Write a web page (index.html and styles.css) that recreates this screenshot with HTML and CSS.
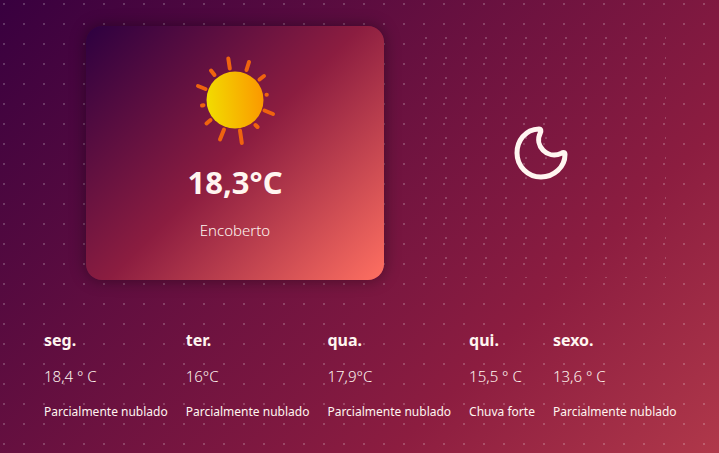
FILE: index.html
```html
<!DOCTYPE html>
<html lang="pt">
<head>
<meta charset="utf-8">
<meta name="viewport" content="width=device-width, initial-scale=1">
<title>Previsão do tempo</title>
<link rel="stylesheet" href="styles.css">
</head>
<body>
<main class="weather">
  <section class="today">
    <article class="card">
      <svg class="sun" viewBox="0 0 110 110" aria-hidden="true">
        <defs>
          <linearGradient id="disc" x1="0" y1="0.55" x2="1" y2="0.45">
            <stop offset="0" stop-color="#f2dc00"/>
            <stop offset="1" stop-color="#fb9800"/>
          </linearGradient>
        </defs>
        <g class="rays">
          <path d="M48.3 13.5 49.8 23.5"/>
          <path d="M69 17 66.500 25"/>
          <path d="M84 31 79.500 34.500"/>
          <path d="M86.500 49.700 86.800 49.700"/>
          <path d="M84.500 65.500 93 69"/>
          <path d="M75.500 80 77.500 82"/>
          <path d="M60 85.500 61.800 98"/>
          <path d="M44 84.500 40 94.500"/>
          <path d="M30.500 75 26.500 78.500"/>
          <path d="M22 60.500 23.500 60.200"/>
          <path d="M18 41 25.500 44"/>
          <path d="M31 25.500 34.500 30"/>
        </g>
        <circle cx="55" cy="55" r="28.500" fill="url(#disc)"/>
      </svg>
      <h1 class="temp">18,3°C</h1>
      <p class="summary">Encoberto</p>
    </article>
    <div class="night">
      <svg class="moon" viewBox="0 0 54 54" aria-hidden="true">
        <path d="M25 3C11 3.500 3 15 3 27A24 24 0 0 0 27 51C40 51 51 41 51 28.500C51 26.500 49.500 26 47.500 27.200C33 34 20 19 26.300 7C27.300 5 27 3 25 3Z"/>
      </svg>
    </div>
  </section>
  <ul class="forecast">
    <li class="day"><h2>seg.</h2><p class="degrees">18,4 ° C</p><p class="sky">Parcialmente nublado</p></li>
    <li class="day"><h2>ter.</h2><p class="degrees">16°C</p><p class="sky">Parcialmente nublado</p></li>
    <li class="day"><h2>qua.</h2><p class="degrees">17,9°C</p><p class="sky">Parcialmente nublado</p></li>
    <li class="day"><h2>qui.</h2><p class="degrees">15,5 ° C</p><p class="sky">Chuva forte</p></li>
    <li class="day"><h2>sexo.</h2><p class="degrees">13,6 ° C</p><p class="sky">Parcialmente nublado</p></li>
  </ul>
</main>
</body>
</html>
```
FILE: styles.css
```css
* { box-sizing: border-box; margin: 0; padding: 0; }

:root {
  --dots: url("data:image/svg+xml,%3Csvg xmlns='http://www.w3.org/2000/svg' width='20' height='20'%3E%3Crect x='9' y='9' width='2' height='2' fill='white' fill-opacity='.2'/%3E%3C/svg%3E");
}

body {
  color: #fff5f0;
  font-family: "Noto Sans", "Open Sans", sans-serif;
  font-weight: 300;
  background-color: #8c1d40;
}

.weather {
  min-height: 100vh;
  padding: 26px 40px 0 44px;
  background:
    var(--dots) -6px -6px,
    linear-gradient(135deg, #38003f 0%, #8c1d40 72%, #b0384a 100%);
}

.today {
  display: flex;
  align-items: center;
  justify-content: space-between;
  padding: 0 13px 0 42px;
}

.card {
  width: 298px;
  padding: 19px 24px 38px;
  border-radius: 16px;
  text-align: center;
  background: linear-gradient(135deg, #2d0040 0%, #8c1d40 50%, #ff6f61 100%);
  box-shadow: 0 0 16px rgba(0, 0, 0, 0.4);
}

.sun { display: block; width: 110px; height: 110px; margin: 0 auto; }
.rays { fill: none; stroke: #ef630f; stroke-width: 4; stroke-linecap: round; }

.temp { font-size: 31px; line-height: 48px; font-weight: 700; margin-top: 3px; }
.summary { font-size: 15px; line-height: 24px; margin-top: 12px; }

.night {
  display: flex;
  align-items: center;
  justify-content: center;
  width: 250px;
  aspect-ratio: 1;
  background: var(--dots);
}

.moon { width: 54px; height: 54px; fill: none; stroke: #fff5f0; stroke-width: 5; stroke-linejoin: round; }

.forecast {
  display: flex;
  gap: 18px;
  margin-top: 48px;
  list-style: none;
  white-space: nowrap;
}

.day h2 { font-size: 16px; line-height: 24px; font-weight: 700; }
.degrees { font-size: 15px; line-height: 24px; margin-top: 12px; }
.sky { font-size: 12px; line-height: 20px; margin-top: 14px; font-weight: 400; }
```
